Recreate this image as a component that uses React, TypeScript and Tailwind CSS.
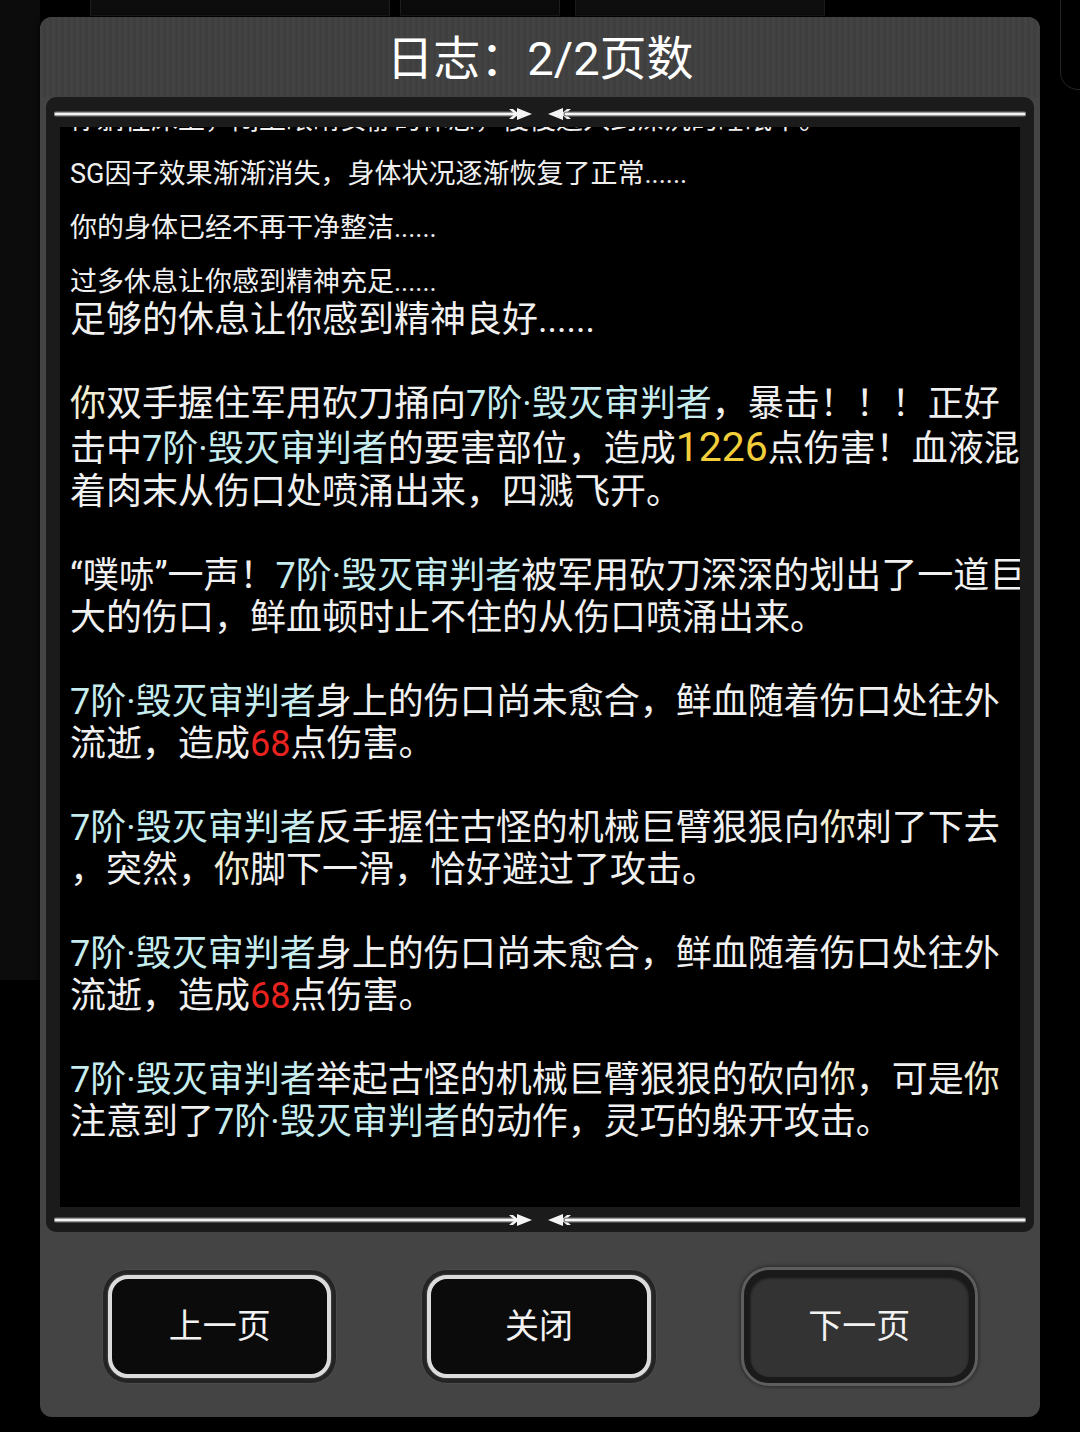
import React from "react";

type Seg = { t: string; c?: "name" | "you" | "gold" | "red" };

const NAME = "7阶·毁灭审判者";

// small system lines at the top of the page
const smallLines = [
  "你躺在床上，闭上眼睛安静的休息，慢慢进入到深沉的睡眠中。",
  "SG因子效果渐渐消失，身体状况逐渐恢复了正常......",
  "你的身体已经不再干净整洁......",
  "过多休息让你感到精神充足......",
];

// each paragraph is a list of visual lines, each line a list of segments
const paragraphs: Seg[][][] = [
  [[{ t: "足够的休息让你感到精神良好......" }]],
  [
    [{ t: "你", c: "you" }, { t: "双手握住军用砍刀捅向" }, { t: NAME, c: "name" }, { t: "，暴击！！！正好" }],
    [{ t: "击中" }, { t: NAME, c: "name" }, { t: "的要害部位，造成" }, { t: "1226", c: "gold" }, { t: "点伤害！血液混" }],
    [{ t: "着肉末从伤口处喷涌出来，四溅飞开。" }],
  ],
  [
    [{ t: "“噗哧”一声！" }, { t: NAME, c: "name" }, { t: "被军用砍刀深深的划出了一道巨" }],
    [{ t: "大的伤口，鲜血顿时止不住的从伤口喷涌出来。" }],
  ],
  [
    [{ t: NAME, c: "name" }, { t: "身上的伤口尚未愈合，鲜血随着伤口处往外" }],
    [{ t: "流逝，造成" }, { t: "68", c: "red" }, { t: "点伤害。" }],
  ],
  [
    [{ t: NAME, c: "name" }, { t: "反手握住古怪的机械巨臂狠狠向" }, { t: "你", c: "you" }, { t: "刺了下去" }],
    [{ t: "，突然，" }, { t: "你", c: "you" }, { t: "脚下一滑，恰好避过了攻击。" }],
  ],
  [
    [{ t: NAME, c: "name" }, { t: "身上的伤口尚未愈合，鲜血随着伤口处往外" }],
    [{ t: "流逝，造成" }, { t: "68", c: "red" }, { t: "点伤害。" }],
  ],
  [
    [{ t: NAME, c: "name" }, { t: "举起古怪的机械巨臂狠狠的砍向" }, { t: "你", c: "you" }, { t: "，可是" }, { t: "你", c: "you" }],
    [{ t: "注意到了" }, { t: NAME, c: "name" }, { t: "的动作，灵巧的躲开攻击。" }],
  ],
];

function Segment({ seg }: { seg: Seg }) {
  if (seg.c === "name") return <span className="text-[#c6ecee]">{seg.t}</span>;
  if (seg.c === "you") return <span className="text-[#efeccf]">{seg.t}</span>;
  if (seg.c === "gold") return <span className="text-[41px] leading-none text-[#f2cf3a]">{seg.t}</span>;
  if (seg.c === "red") return <span className="text-[#e8231f]">{seg.t}</span>;
  return <span>{seg.t}</span>;
}

function Divider() {
  return (
    <svg width="972" height="14" viewBox="0 0 972 14" className="block">
      <line x1="2" y1="7" x2="460" y2="7" stroke="#7a7a7a" strokeWidth="5" strokeLinecap="round" />
      <line x1="2" y1="7" x2="460" y2="7" stroke="#f4f4f4" strokeWidth="2.5" strokeLinecap="round" />
      <polygon points="455,2 461,7 455,12 459,12 465,7 459,2" fill="#f4f4f4" />
      <polygon points="463,1 478,7 463,13" fill="#f4f4f4" />
      <polygon points="509,1 494,7 509,13" fill="#f4f4f4" />
      <polygon points="517,2 511,7 517,12 513,12 507,7 513,2" fill="#f4f4f4" />
      <line x1="512" y1="7" x2="970" y2="7" stroke="#7a7a7a" strokeWidth="5" strokeLinecap="round" />
      <line x1="512" y1="7" x2="970" y2="7" stroke="#f4f4f4" strokeWidth="2.5" strokeLinecap="round" />
    </svg>
  );
}

function GameButton({ label, dim }: { label: string; dim?: boolean }) {
  if (dim) {
    return (
      <div className="w-[238px] h-[119px] -mt-[2px] rounded-[28px] border-[3px] border-[#5e5e5e] bg-[#1a1a1a] p-[6px] shadow-[0_0_4px_rgba(0,0,0,0.6)]">
        <div className="w-full h-full rounded-[20px] bg-[#333333] shadow-[inset_0_2px_3px_rgba(0,0,0,0.6)] flex items-center justify-center text-[34px] text-[#f2f2f2]">
          {label}
        </div>
      </div>
    );
  }
  return (
    <div className="w-[236px] h-[115px] rounded-[26px] bg-[#242424] border border-[#4c4c4c] p-[5px]">
      <div className="w-full h-full rounded-[20px] border-[4px] border-[#dcdcdc] bg-[#0b0b0b] shadow-[0_0_2px_rgba(255,255,255,0.4)] flex items-center justify-center text-[34px] text-[#f2f2f2]">
        {label}
      </div>
    </div>
  );
}

export default function App() {
  return (
    <div className="relative w-[1080px] h-[1432px] bg-black overflow-hidden font-['Roboto','Noto_Sans_CJK_SC',sans-serif]">
      {/* faint game screen behind the dialog */}
      <div className="absolute left-0 top-0 w-[40px] h-[980px] bg-[#0c0c0c]" />
      <div className="absolute left-[90px] top-[-6px] w-[300px] h-[22px] border border-[#1e1e1e] bg-[#0d0d0d]" />
      <div className="absolute left-[400px] top-[-6px] w-[160px] h-[22px] border border-[#1e1e1e] bg-[#0b0b0b]" />
      <div className="absolute left-[575px] top-[-6px] w-[250px] h-[22px] border border-[#1c1c1c] bg-[#0e0e0e]" />
      <div className="absolute left-[1060px] top-[-20px] w-[60px] h-[110px] rounded-[18px] border border-[#262626]" />

      <div className="relative pt-[17px] pl-[40px]">
        <div className="w-[1000px] h-[1400px] rounded-[12px] bg-[#444444] flex flex-col shadow-[0_0_6px_rgba(0,0,0,0.8)]">
          {/* title */}
          <div className="h-[80px] pt-[5px] rounded-t-[12px] bg-[repeating-linear-gradient(90deg,#434343_0px,#434343_3px,#3f3f3f_3px,#3f3f3f_6px)] flex items-center justify-center text-[47px] text-white">
            日志：2/2页数
          </div>

          {/* log frame */}
          <div className="mx-[6px] h-[1135px] rounded-[10px] bg-[#1b1b1b] flex flex-col">
            <div className="h-[30px] pt-[10px] px-[8px]">
              <Divider />
            </div>
            <div className="mx-[14px] h-[1080px] bg-black overflow-hidden pl-[10px] text-[#f0f0f0]">
              <div className="mt-[-24px]">
                {smallLines.map((l, i) => (
                  <div key={i} className="h-[34px] mb-[20px] last:mb-0 text-[27px] leading-[34px] whitespace-nowrap">
                    {l}
                  </div>
                ))}
              </div>
              {paragraphs.map((p, i) => (
                <div key={i} className="mb-[42px]">
                  {p.map((line, j) =>
                    line.some((s) => s.c === "gold") ? (
                      <div key={j} className="h-[46px] pt-[1px] text-[36px] leading-[46px] whitespace-nowrap">
                        {line.map((s, k) => (
                          <Segment key={k} seg={s} />
                        ))}
                      </div>
                    ) : (
                      <div key={j} className="h-[42px] text-[36px] leading-[42px] whitespace-nowrap">
                        {line.map((s, k) => (
                          <Segment key={k} seg={s} />
                        ))}
                      </div>
                    )
                  )}
                </div>
              ))}
            </div>
            <div className="h-[25px] pt-[6px] px-[8px]">
              <Divider />
            </div>
          </div>

          {/* buttons */}
          <div className="flex-1 flex items-start gap-[84px] px-[62px] pt-[37px]">
            <GameButton label="上一页" />
            <GameButton label="关闭" />
            <GameButton label="下一页" dim />
          </div>
        </div>
      </div>
    </div>
  );
}
